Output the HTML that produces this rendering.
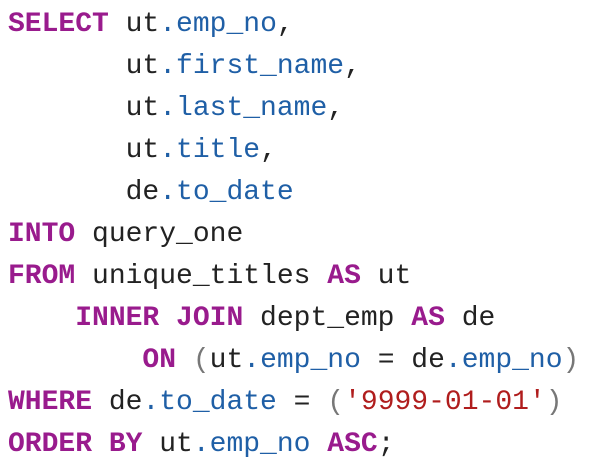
<!DOCTYPE html>
<html><head><style>
html,body{margin:0;padding:0;background:#fff;width:600px;height:476px;overflow:hidden}
pre{margin:0;padding:4px 0 0 8px;font-family:"Liberation Mono",monospace;font-size:28px;line-height:42px;color:#222}
.k{color:#991b8d;font-weight:bold}
.b{color:#1f5fa6}
.s{color:#b01d1d}
.p{color:#777}
</style></head><body><pre><span class="k">SELECT</span> ut<span class="b">.emp_no</span>,
       ut<span class="b">.first_name</span>,
       ut<span class="b">.last_name</span>,
       ut<span class="b">.title</span>,
       de<span class="b">.to_date</span>
<span class="k">INTO</span> query_one
<span class="k">FROM</span> unique_titles <span class="k">AS</span> ut
    <span class="k">INNER JOIN</span> dept_emp <span class="k">AS</span> de
        <span class="k">ON</span> <span class="p">(</span>ut<span class="b">.emp_no</span> = de<span class="b">.emp_no</span><span class="p">)</span>
<span class="k">WHERE</span> de<span class="b">.to_date</span> = <span class="p">(</span><span class="s">'9999-01-01'</span><span class="p">)</span>
<span class="k">ORDER BY</span> ut<span class="b">.emp_no</span> <span class="k">ASC</span>;</pre></body></html>
